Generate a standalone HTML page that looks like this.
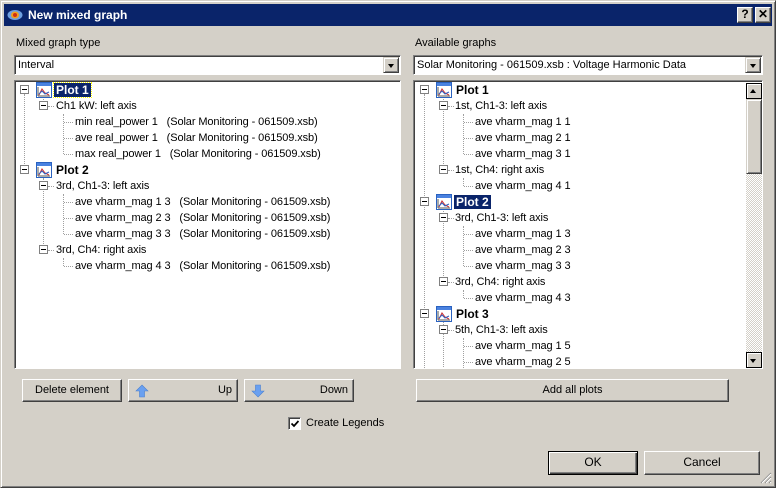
<!DOCTYPE html>
<html><head><meta charset="utf-8"><style>
*{box-sizing:border-box;margin:0;padding:0}
body{width:776px;height:488px;overflow:hidden;background:#d4d0c8;font:11px "Liberation Sans",Arial,sans-serif;color:#000;position:relative}
.win{position:absolute;left:0;top:0;width:776px;height:488px;border:1px solid;border-color:#d4d0c8 #404040 #404040 #d4d0c8;box-shadow:inset 1px 1px 0 #fff,inset -1px -1px 0 #808080}
.title{position:absolute;left:4px;top:4px;width:768px;height:22px;background:#0a246a;color:#fff;font-weight:bold;font-size:12px}
.title span{position:absolute;left:24px;top:4px}
.tb{position:absolute;top:3px;width:16px;height:16px;background:#d4d0c8;border:1px solid;border-color:#fff #404040 #404040 #fff;box-shadow:inset -1px -1px 0 #808080;color:#000;font-weight:bold;font-size:12px;text-align:center;line-height:13px}
.a{position:absolute}
.lbl{position:absolute;white-space:nowrap}
.combo{position:absolute;height:20px;background:#fff;border:1px solid;border-color:#808080 #fff #fff #808080;box-shadow:inset 1px 1px 0 #404040}
.combo span{position:absolute;left:3px;top:3px}
.dd{position:absolute;right:1px;top:1px;width:16px;height:16px;background:#d4d0c8;border:1px solid;border-color:#d4d0c8 #404040 #404040 #d4d0c8;box-shadow:inset 1px 1px 0 #fff,inset -1px -1px 0 #808080}
.dd:after{content:"";position:absolute;left:4px;top:6px;border:3.5px solid transparent;border-top:4px solid #000;border-bottom:0}
.tree{position:absolute;background:#fff;border:1px solid;border-color:#808080 #fff #fff #808080;box-shadow:inset 1px 1px 0 #404040;overflow:hidden}
.r{position:absolute;height:16px;white-space:nowrap;line-height:16px;letter-spacing:-0.1px}
.bx{position:absolute;width:9px;height:9px;border:1px solid #808080;background:#fff}
.bx:after{content:"";position:absolute;left:1px;top:3px;width:5px;height:1px;background:#000}
.vl{position:absolute;width:0;border-left:1px dotted #a0a0a0}
.hl{position:absolute;height:0;border-top:1px dotted #a0a0a0}
.p{font-weight:bold;font-size:12px;padding:0 2px;letter-spacing:0}
.sel{background:#0a246a;color:#fff;outline:1px dotted #ff0}
.btn{position:absolute;height:23px;background:#d4d0c8;border:1px solid;border-color:#fff #404040 #404040 #fff;box-shadow:inset -1px -1px 0 #808080;text-align:center;line-height:20px}
</style></head><body>
<div class="win"></div>
<div class="title">
<svg class="a" style="left:3px;top:4px" width="16" height="14"><ellipse cx="8" cy="7" rx="7.5" ry="5" fill="#6fa0e0"/><ellipse cx="8" cy="7" rx="4" ry="3.5" fill="#f0a020"/><circle cx="8" cy="7" r="2" fill="#d03010"/></svg>
<span>New mixed graph</span>
<div class="tb" style="left:733px">?</div><div class="tb" style="left:751px">✕</div>
</div>

<div class="lbl" style="left:16px;top:37px">Mixed graph type</div>
<div class="combo" style="left:14px;top:55px;width:387px"><span>Interval</span><div class="dd"></div></div>
<div class="lbl" style="left:415px;top:37px">Available graphs</div>
<div class="combo" style="left:413px;top:55px;width:350px"><span>Solar Monitoring - 061509.xsb : Voltage Harmonic Data</span><div class="dd"></div></div>

<svg width="0" height="0" style="position:absolute"><defs><symbol id="ic" viewBox="0 0 16 16"><rect x="0.5" y="0.5" width="15" height="15" fill="#fff" stroke="#2a62c0"/><rect x="1" y="1" width="14" height="3" fill="#4a82e0"/><polyline points="3,13 6,7 9,11 13,13" fill="none" stroke="#d03030"/><polyline points="3,12 6,9 9,12 13,10" fill="none" stroke="#3060c0"/><line x1="2" y1="14" x2="14" y2="14" stroke="#555"/><line x1="2" y1="5" x2="2" y2="14" stroke="#555"/></symbol></defs></svg>

<div class="tree" style="left:14px;top:80px;width:387px;height:289px">
<div class="vl" style="left:9px;top:13px;height:76px"></div>
<div class="vl" style="left:28px;top:16px;height:9px"></div>
<div class="vl" style="left:48px;top:33px;height:40px"></div>
<div class="vl" style="left:28px;top:97px;height:72px"></div>
<div class="vl" style="left:48px;top:113px;height:40px"></div>
<div class="vl" style="left:48px;top:177px;height:8px"></div>
<div class="bx" style="left:5px;top:4px"></div><svg class="a" style="left:21px;top:1px" width="16" height="16"><use href="#ic"/></svg><div class="r" style="left:39px;top:1px"><span class="p sel">Plot 1</span></div>
<div class="bx" style="left:24px;top:20px"></div><div class="hl" style="left:33px;top:25px;width:6px"></div><div class="r" style="left:41px;top:17px">Ch1 kW: left axis</div>
<div class="hl" style="left:49px;top:41px;width:9px"></div><div class="r" style="left:60px;top:33px">min real_power 1&nbsp;&nbsp; (Solar Monitoring - 061509.xsb)</div>
<div class="hl" style="left:49px;top:57px;width:9px"></div><div class="r" style="left:60px;top:49px">ave real_power 1&nbsp;&nbsp; (Solar Monitoring - 061509.xsb)</div>
<div class="hl" style="left:49px;top:73px;width:9px"></div><div class="r" style="left:60px;top:65px">max real_power 1&nbsp;&nbsp; (Solar Monitoring - 061509.xsb)</div>
<div class="bx" style="left:5px;top:84px"></div><svg class="a" style="left:21px;top:81px" width="16" height="16"><use href="#ic"/></svg><div class="r" style="left:39px;top:81px"><span class="p">Plot 2</span></div>
<div class="bx" style="left:24px;top:100px"></div><div class="hl" style="left:33px;top:105px;width:6px"></div><div class="r" style="left:41px;top:97px">3rd, Ch1-3: left axis</div>
<div class="hl" style="left:49px;top:121px;width:9px"></div><div class="r" style="left:60px;top:113px">ave vharm_mag 1 3&nbsp;&nbsp; (Solar Monitoring - 061509.xsb)</div>
<div class="hl" style="left:49px;top:137px;width:9px"></div><div class="r" style="left:60px;top:129px">ave vharm_mag 2 3&nbsp;&nbsp; (Solar Monitoring - 061509.xsb)</div>
<div class="hl" style="left:49px;top:153px;width:9px"></div><div class="r" style="left:60px;top:145px">ave vharm_mag 3 3&nbsp;&nbsp; (Solar Monitoring - 061509.xsb)</div>
<div class="bx" style="left:24px;top:164px"></div><div class="hl" style="left:33px;top:169px;width:6px"></div><div class="r" style="left:41px;top:161px">3rd, Ch4: right axis</div>
<div class="hl" style="left:49px;top:185px;width:9px"></div><div class="r" style="left:60px;top:177px">ave vharm_mag 4 3&nbsp;&nbsp; (Solar Monitoring - 061509.xsb)</div>
</div>

<div class="tree" style="left:413px;top:80px;width:350px;height:289px">
<div class="vl" style="left:10px;top:13px;height:280px"></div>
<div class="vl" style="left:29px;top:16px;height:73px"></div>
<div class="vl" style="left:49px;top:33px;height:40px"></div>
<div class="vl" style="left:49px;top:97px;height:8px"></div>
<div class="vl" style="left:29px;top:128px;height:73px"></div>
<div class="vl" style="left:49px;top:145px;height:40px"></div>
<div class="vl" style="left:49px;top:209px;height:8px"></div>
<div class="vl" style="left:29px;top:240px;height:60px"></div>
<div class="vl" style="left:49px;top:257px;height:40px"></div>

<div class="bx" style="left:6px;top:4px"></div><svg class="a" style="left:22px;top:1px" width="16" height="16"><use href="#ic"/></svg><div class="r" style="left:40px;top:1px"><span class="p">Plot 1</span></div>
<div class="bx" style="left:25px;top:20px"></div><div class="hl" style="left:34px;top:25px;width:6px"></div><div class="r" style="left:41px;top:17px">1st, Ch1-3: left axis</div>
<div class="hl" style="left:50px;top:41px;width:9px"></div><div class="r" style="left:61px;top:33px">ave vharm_mag 1 1</div>
<div class="hl" style="left:50px;top:57px;width:9px"></div><div class="r" style="left:61px;top:49px">ave vharm_mag 2 1</div>
<div class="hl" style="left:50px;top:73px;width:9px"></div><div class="r" style="left:61px;top:65px">ave vharm_mag 3 1</div>
<div class="bx" style="left:25px;top:84px"></div><div class="hl" style="left:34px;top:89px;width:6px"></div><div class="r" style="left:41px;top:81px">1st, Ch4: right axis</div>
<div class="hl" style="left:50px;top:105px;width:9px"></div><div class="r" style="left:61px;top:97px">ave vharm_mag 4 1</div>
<div class="bx" style="left:6px;top:116px"></div><svg class="a" style="left:22px;top:113px" width="16" height="16"><use href="#ic"/></svg><div class="r" style="left:40px;top:113px"><span class="p sel" style="outline:none">Plot 2</span></div>
<div class="bx" style="left:25px;top:132px"></div><div class="hl" style="left:34px;top:137px;width:6px"></div><div class="r" style="left:41px;top:129px">3rd, Ch1-3: left axis</div>
<div class="hl" style="left:50px;top:153px;width:9px"></div><div class="r" style="left:61px;top:145px">ave vharm_mag 1 3</div>
<div class="hl" style="left:50px;top:169px;width:9px"></div><div class="r" style="left:61px;top:161px">ave vharm_mag 2 3</div>
<div class="hl" style="left:50px;top:185px;width:9px"></div><div class="r" style="left:61px;top:177px">ave vharm_mag 3 3</div>
<div class="bx" style="left:25px;top:196px"></div><div class="hl" style="left:34px;top:201px;width:6px"></div><div class="r" style="left:41px;top:193px">3rd, Ch4: right axis</div>
<div class="hl" style="left:50px;top:217px;width:9px"></div><div class="r" style="left:61px;top:209px">ave vharm_mag 4 3</div>
<div class="bx" style="left:6px;top:228px"></div><svg class="a" style="left:22px;top:225px" width="16" height="16"><use href="#ic"/></svg><div class="r" style="left:40px;top:225px"><span class="p">Plot 3</span></div>
<div class="bx" style="left:25px;top:244px"></div><div class="hl" style="left:34px;top:249px;width:6px"></div><div class="r" style="left:41px;top:241px">5th, Ch1-3: left axis</div>
<div class="hl" style="left:50px;top:265px;width:9px"></div><div class="r" style="left:61px;top:257px">ave vharm_mag 1 5</div>
<div class="hl" style="left:50px;top:281px;width:9px"></div><div class="r" style="left:61px;top:273px">ave vharm_mag 2 5</div>
<div class="a" style="left:332px;top:2px;width:16px;height:285px;background:repeating-conic-gradient(#fff 0 25%,#d4d0c8 0 50%) 0 0/2px 2px"></div>
<div class="a" style="left:332px;top:2px;width:16px;height:16px;background:#d4d0c8;border:1px solid #000;box-shadow:inset 1px 1px 0 #fff"><div class="a" style="left:3px;top:5px;border:3.5px solid transparent;border-bottom:4px solid #000;border-top:0"></div></div>
<div class="a" style="left:332px;top:18px;width:16px;height:75px;background:#d4d0c8;border:1px solid;border-color:#d4d0c8 #404040 #404040 #d4d0c8;box-shadow:inset 1px 1px 0 #fff,inset -1px -1px 0 #808080"></div>
<div class="a" style="left:332px;top:271px;width:16px;height:16px;background:#d4d0c8;border:1px solid #000;box-shadow:inset 1px 1px 0 #fff"><div class="a" style="left:3px;top:6px;border:3.5px solid transparent;border-top:4px solid #000;border-bottom:0"></div></div>
</div>

<div class="btn" style="left:22px;top:379px;width:100px">Delete element</div>
<div class="btn" style="left:128px;top:379px;width:110px"><svg class="a" style="left:6px;top:4px" width="14" height="14"><path d="M7 1 L13 7 L9.5 7 L9.5 13 L4.5 13 L4.5 7 L1 7 Z" fill="#6aa0f0" stroke="#4a80d0" stroke-width="0.6"/></svg><span class="a" style="right:5px;top:0">Up</span></div>
<div class="btn" style="left:244px;top:379px;width:110px"><svg class="a" style="left:6px;top:4px" width="14" height="14"><path d="M7 13 L13 7 L9.5 7 L9.5 1 L4.5 1 L4.5 7 L1 7 Z" fill="#6aa0f0" stroke="#4a80d0" stroke-width="0.6"/></svg><span class="a" style="right:5px;top:0">Down</span></div>
<div class="btn" style="left:416px;top:379px;width:313px">Add all plots</div>

<div class="a" style="left:288px;top:417px;width:13px;height:13px;background:#fff;border:1px solid;border-color:#808080 #fff #fff #808080;box-shadow:inset 1px 1px 0 #404040"><svg class="a" style="left:2px;top:2px" width="8" height="8"><path d="M0.5 3.5 L3 6 L7.5 1" fill="none" stroke="#000" stroke-width="1.8"/></svg></div>
<div class="lbl" style="left:306px;top:417px">Create Legends</div>

<div class="btn" style="left:548px;top:451px;width:90px;height:24px;border:1px solid #000;box-shadow:inset 1px 1px 0 #fff,inset -1px -1px 0 #404040,inset -2px -2px 0 #808080;font-size:12px">OK</div>
<div class="btn" style="left:644px;top:451px;width:116px;height:24px;font-size:12px">Cancel</div>
<svg class="a" style="left:760px;top:472px" width="12" height="12"><path d="M11 1 L1 11 M11 5 L5 11 M11 9 L9 11" stroke="#808080" stroke-width="1"/><path d="M11 2 L2 11 M11 6 L6 11 M11 10 L10 11" stroke="#fff" stroke-width="1"/></svg>
</body></html>
